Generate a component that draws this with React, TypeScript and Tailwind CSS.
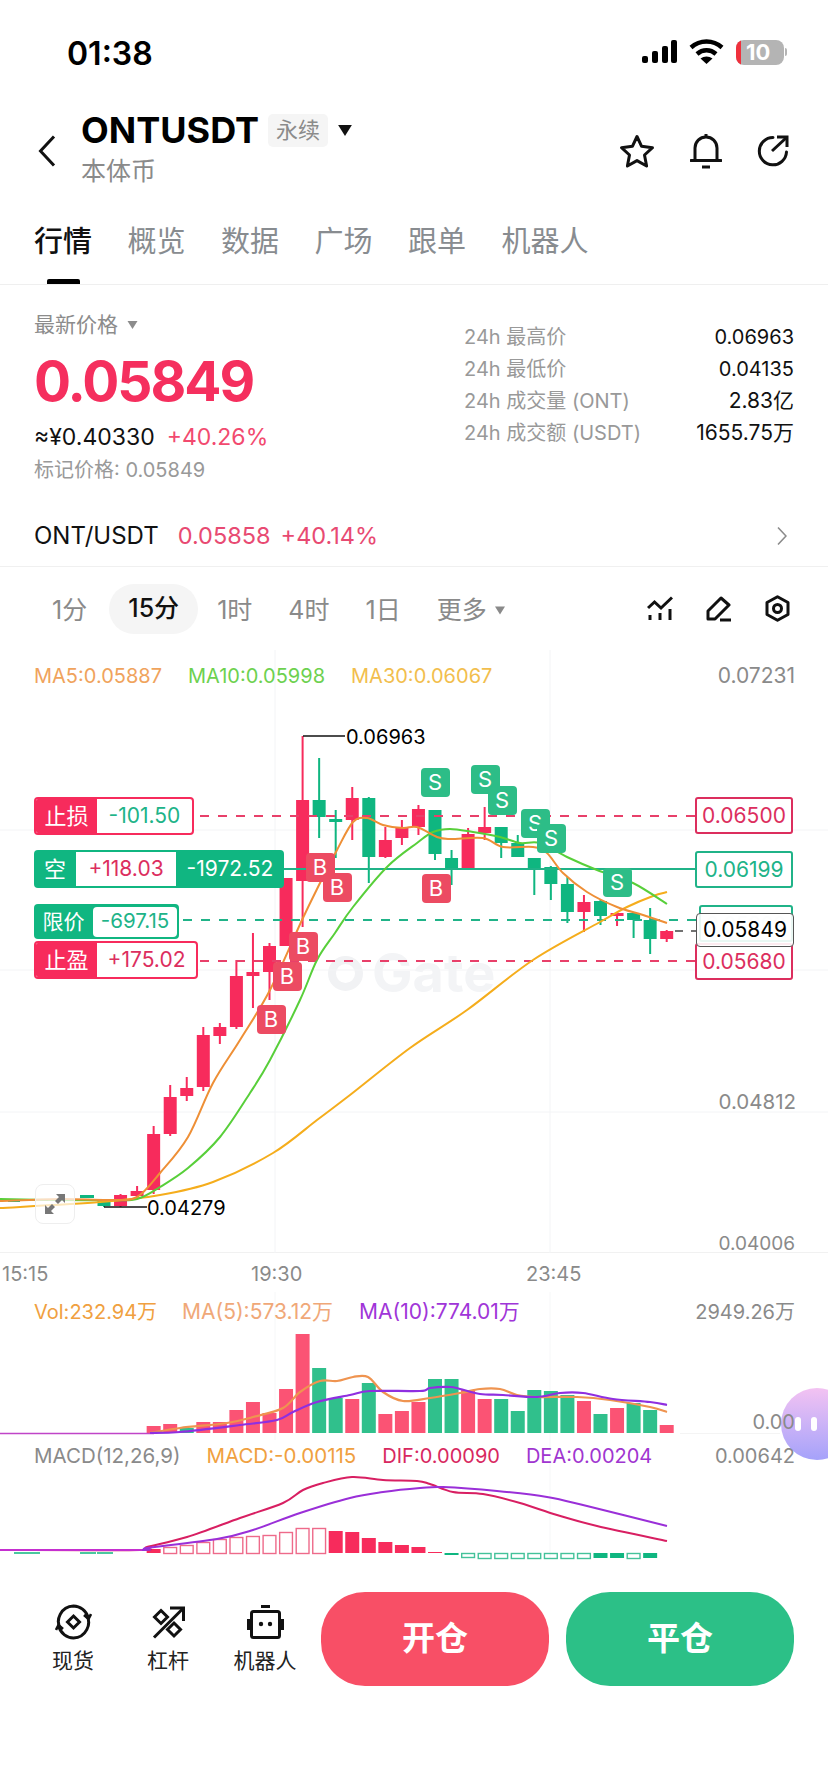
import React from "react";

const xOf = (i: number) => 104 + 16.55 * i;

// [bodyTop, bodyBottom, wickTop, wickBottom, isUp]
const candles: [number, number, number, number, boolean][] = [
  [1200, 1206, 1199, 1207, false],
  [1195, 1206, 1194, 1207, true],
  [1191, 1196, 1186, 1197, true],
  [1134, 1190, 1126, 1194, true],
  [1097, 1134, 1085, 1136, true],
  [1088, 1096, 1077, 1101, true],
  [1035, 1087, 1027, 1091, true],
  [1027, 1036, 1023, 1044, true],
  [976, 1027, 960, 1029, true],
  [972, 976, 933, 1008, true],
  [946, 972, 943, 1000, true],
  [878, 946, 878, 946, true],
  [800, 881, 736, 927, true],
  [800, 817, 758, 838, false],
  [819, 822, 810, 858, false],
  [798, 820, 787, 840, true],
  [798, 857, 797, 883, false],
  [840, 857, 827, 858, true],
  [828, 838, 820, 845, true],
  [809, 827, 805, 835, true],
  [810, 854, 810, 860, false],
  [858, 868, 850, 885, false],
  [834, 868, 828, 868, true],
  [827, 833, 807, 840, true],
  [827, 843, 827, 858, false],
  [843, 857, 835, 857, false],
  [858, 868, 858, 895, false],
  [867, 884, 866, 900, false],
  [884, 912, 877, 923, false],
  [902, 912, 895, 932, true],
  [901, 916, 900, 925, false],
  [913, 916, 912, 926, true],
  [913, 920, 912, 938, false],
  [920, 939, 908, 954, false],
  [931, 939, 930, 942, true],
];

const ma5: [number, number][] = [[0,1201],[60,1199],[110,1200],[137,1197],[160,1173],[188,1137],[213,1083],[240,1040],[270,990],[302,920],[320,883],[337,850],[353,822],[367,818],[383,825],[403,828],[417,827],[437,837],[450,839],[483,838],[503,847],[533,847],[547,853],[563,873],[587,892],[617,907],[643,915],[667,923]];
const ma10: [number, number][] = [[0,1199],[60,1200],[110,1200],[137,1199],[160,1187],[188,1168],[220,1137],[250,1093],[270,1060],[300,1000],[317,960],[335,933],[353,907],[387,867],[417,843],[433,832],[450,829],[473,832],[500,837],[520,843],[540,843],[567,857],[597,870],[633,883],[667,904]];
const ma30: [number, number][] = [[0,1208],[100,1202],[160,1195],[213,1182],[273,1153],[317,1120],[350,1095],[410,1048],[467,1010],[533,960],[600,922],[627,907],[653,896],[667,892]];

const vols: [number, boolean][] = [[1426,true],[1424,true],[1428,false],[1422,true],[1422,true],[1410,true],[1402,true],[1413,true],[1389,true],[1334,true],[1368,false],[1398,false],[1399,true],[1383,false],[1414,true],[1411,true],[1402,true],[1379,false],[1379,false],[1390,true],[1399,true],[1399,false],[1411,false],[1390,false],[1391,false],[1395,false],[1401,true],[1414,false],[1408,true],[1403,false],[1410,false],[1425,true]];
const volMa5: [number, number][] = [[150,1433],[180,1428],[227,1423],[253,1417],[283,1408],[300,1392],[320,1381],[337,1381],[353,1377],[368,1377],[383,1392],[403,1401],[430,1398],[460,1393],[480,1389],[500,1389],[517,1395],[537,1397],[577,1397],[610,1400],[650,1407],[667,1412]];
const volMa10: [number, number][] = [[150,1433],[180,1432],[240,1425],[277,1420],[293,1412],[317,1402],[350,1395],[370,1391],[420,1391],[430,1388],[450,1387],[460,1389],[480,1394],[503,1395],[537,1397],[560,1393],[583,1393],[613,1399],[650,1402],[667,1405]];

const dif: [number, number][] = [[0,1550],[140,1550],[147,1547],[187,1537],[240,1518],[283,1503],[303,1490],[323,1483],[352,1477],[383,1480],[417,1481],[430,1484],[453,1492],[483,1494],[520,1503],[557,1515],[597,1526],[667,1541]];
const dea: [number, number][] = [[0,1550],[140,1550],[147,1548],[217,1539],[253,1530],[300,1513],[350,1498],[383,1492],[420,1488],[443,1487],[497,1491],[547,1497],[587,1506],[667,1526]];
// [top, bottom, filled, up]
const macd: [number, number, boolean, boolean][] = [
  [1549,1553,true,true],[1547,1553,false,true],[1545,1553,false,true],[1542,1553,false,true],[1539,1553,false,true],[1537,1553,false,true],[1536,1553,false,true],[1535,1553,false,true],[1532,1553,false,true],[1528,1553,false,true],[1528,1553,false,true],
  [1531,1553,true,true],[1532,1553,true,true],[1538,1553,true,true],[1542,1553,true,true],[1545,1553,true,true],[1547,1553,true,true],
  [1552,1553,true,true],[1553,1555,true,false],[1553,1557,false,false],[1553,1558,false,false],[1553,1558,false,false],[1553,1558,false,false],[1553,1558,false,false],[1553,1558,false,false],[1553,1558,false,false],[1553,1558,false,false],[1553,1558,true,false],[1553,1558,true,false],[1553,1558,false,false],[1553,1558,true,false],
];

function smooth(p: [number, number][]) {
  let d = `M${p[0][0]} ${p[0][1]}`;
  for (let i = 0; i < p.length - 1; i++) {
    const a = p[Math.max(i - 1, 0)], b = p[i], c = p[i + 1], e = p[Math.min(i + 2, p.length - 1)];
    d += ` C${(b[0] + (c[0] - a[0]) / 6).toFixed(1)} ${(b[1] + (c[1] - a[1]) / 6).toFixed(1)} ${(c[0] - (e[0] - b[0]) / 6).toFixed(1)} ${(c[1] - (e[1] - b[1]) / 6).toFixed(1)} ${c[0]} ${c[1]}`;
  }
  return d;
}

const RED = "#f72b5c";
const GREEN = "#0fb680";

function Tri({ className }: { className: string }) {
  return (
    <svg viewBox="0 0 10 8" className={className}>
      <path d="M0 0h10L5 8z" fill="currentColor" />
    </svg>
  );
}

function StatusBar() {
  return (
    <div className="flex h-[100px] items-start justify-between pl-[67px] pr-[41px] pt-[35px]">
      <span className="text-[32px] font-semibold leading-[38px] text-black">01:38</span>
      <div className="mt-[4px] flex items-center gap-[12px]">
        <svg width="36" height="24" viewBox="0 0 36 24" fill="#000">
          <rect x="1" y="16" width="6" height="7" rx="2" />
          <rect x="11" y="11" width="6" height="12" rx="2" />
          <rect x="21" y="6" width="6" height="17" rx="2" />
          <rect x="30" y="0" width="6" height="23" rx="2" />
        </svg>
        <svg width="35" height="26" viewBox="0 0 35 26" fill="none" stroke="#000" strokeWidth="4.4">
          <path d="M2 8.5C11 0.5 24 0.5 33 8.5" />
          <path d="M8 15C13.5 10 21.5 10 27 15" />
          <path d="M17.5 25L11.5 19.5C15 16.8 20 16.8 23.5 19.5Z" fill="#000" stroke="none" />
        </svg>
        <div className="flex items-center">
          <div className="flex h-[25px] w-[48px] items-center overflow-hidden rounded-[8px] bg-[#b4b4b4]">
            <div className="h-full w-[5px] bg-[#f0303c]" />
            <span className="ml-[5px] text-[22px] font-bold leading-none text-white">10</span>
          </div>
          <div className="ml-[1px] h-[8px] w-[2px] rounded-r bg-[#b4b4b4]" />
        </div>
      </div>
    </div>
  );
}

function Header() {
  return (
    <div className="flex h-[90px] items-start pl-[38px] pr-[39px]">
      <svg width="18" height="32" viewBox="0 0 18 32" fill="none" stroke="#111" strokeWidth="3" className="mt-[35px]">
        <path d="M16 1.5L2.5 16L16 30.5" />
      </svg>
      <div className="ml-[25px] flex flex-col">
        <div className="mt-[13px] flex items-center">
          <span className="text-[36px] font-bold leading-[34px] text-black">ONTUSDT</span>
          <span className="ml-[9px] flex h-[33px] w-[60px] items-center justify-center rounded-[5px] bg-[#f5f5f5] text-[22px] text-[#8b8b8b]">永续</span>
          <Tri className="ml-[10px] h-[11px] w-[14px] text-[#111]" />
        </div>
        <span className="mt-[9px] text-[25px] leading-[30px] text-[#8a8a8a]">本体币</span>
      </div>
      <div className="ml-auto mt-[33px] flex items-center gap-[35px]">
        <svg width="36" height="35" viewBox="0 0 36 35" fill="none" stroke="#111" strokeWidth="3" strokeLinejoin="round">
          <path d="M18 2.5L22.6 12.3L33.5 13.7L25.5 21L27.6 32L18 26.6L8.4 32L10.5 21L2.5 13.7L13.4 12.3Z" />
        </svg>
        <svg width="32" height="36" viewBox="0 0 32 36" fill="none" stroke="#111" strokeWidth="3">
          <path d="M1 27.5H31" strokeLinecap="round" />
          <path d="M5 27.5V15C5 8.5 10 4 16 4C22 4 27 8.5 27 15V27.5" />
          <path d="M16 1V4" />
          <path d="M12 34H20" />
        </svg>
        <svg width="32" height="32" viewBox="0 0 32 32" fill="none" stroke="#111" strokeWidth="3">
          <path d="M29.5 17A13.6 13.6 0 1 1 16 2.6" strokeLinecap="round" />
          <path d="M15 16L29 3" />
          <path d="M20 2H30V12" />
        </svg>
      </div>
    </div>
  );
}

function Tabs() {
  const tabs = ["行情", "概览", "数据", "广场", "跟单", "机器人"];
  return (
    <div className="relative flex h-[95px] gap-[35.5px] border-b border-[#efefef] pl-[34px] pt-[32px]">
      {tabs.map((t, i) => (
        <span key={t} className={i === 0 ? "text-[29px] font-medium leading-[40px] text-[#111]" : "text-[29px] leading-[40px] text-[#888c90]"}>{t}</span>
      ))}
      <div className="absolute bottom-0 left-[47px] h-[5px] w-[33px] rounded-t-[2px] bg-black" />
    </div>
  );
}

function Stat({ k, v, wide }: { k: string; v: string; wide?: boolean }) {
  return (
    <div className="flex h-[32px] items-center justify-between">
      <span className="text-[20px] text-[#999]">{k}</span>
      <span className={wide ? "text-[21px] text-[#111]" : "text-[20px] text-[#111]"}>{v}</span>
    </div>
  );
}

function PriceBlock() {
  return (
    <div className="flex h-[216px] justify-between pl-[34px] pr-[34px]">
      <div className="flex flex-col">
        <div className="mt-[26px] flex items-center">
          <span className="text-[21px] leading-[28px] text-[#8c8c8c]">最新价格</span>
          <Tri className="ml-[9px] h-[8px] w-[11px] text-[#8c8c8c]" />
        </div>
        <span className="mt-[8px] text-[55px] font-bold leading-[68px] tracking-[-2px] text-[#f52f5e]">0.05849</span>
        <div className="mt-[6px] flex items-center">
          <span className="text-[23px] leading-[32px] text-[#111]">≈¥0.40330</span>
          <span className="ml-[12px] text-[23px] leading-[32px] text-[#f24a6f]">+40.26%</span>
        </div>
        <span className="mt-[2px] text-[20px] leading-[30px] text-[#999]">标记价格: 0.05849</span>
      </div>
      <div className="mt-[36px] w-[330px]">
        <Stat k="24h 最高价" v="0.06963" />
        <Stat k="24h 最低价" v="0.04135" />
        <Stat k="24h 成交量 (ONT)" v="2.83亿" wide />
        <Stat k="24h 成交额 (USDT)" v="1655.75万" wide />
      </div>
    </div>
  );
}

function SpotRow() {
  return (
    <div className="flex h-[66px] items-center border-b border-[#f0f0f0] pl-[34px] pr-[41px] pt-[4px]">
      <span className="text-[24px] text-[#111]">ONT/USDT</span>
      <span className="ml-[19px] text-[23.5px] text-[#e84a72]">0.05858</span>
      <span className="ml-[10px] text-[23.5px] text-[#e84a72]">+40.14%</span>
      <svg width="10" height="20" viewBox="0 0 10 20" fill="none" stroke="#8b8b8b" strokeWidth="1.6" className="ml-auto">
        <path d="M1 1.5L9 10L1 18.5" />
      </svg>
    </div>
  );
}

function TimeBar() {
  const item = "h-[50px] whitespace-nowrap text-[25px] leading-[50px] text-[#8a8a8a]";
  return (
    <div className="flex h-[83px] items-start pl-[52px] pr-[38px] pt-[18px]">
      <span className={item}>1分</span>
      <span className="ml-[22px] -mt-px flex h-[50px] w-[89px] items-center justify-center rounded-full bg-[#f5f5f5] text-[25px] font-medium text-[#111]">15分</span>
      <span className={"ml-[19px] " + item}>1时</span>
      <span className={"ml-[36px] " + item}>4时</span>
      <span className={"ml-[36px] " + item}>1日</span>
      <span className={"ml-[36px] " + item}>更多</span>
      <Tri className="ml-[8px] mt-[21px] h-[9px] w-[10px] text-[#8a8a8a]" />
      <div className="ml-auto mt-[10px] flex items-center gap-[33px]">
        <svg width="26" height="25" viewBox="0 0 26 25" fill="none" stroke="#111" strokeWidth="3">
          <path d="M1 12L7.5 6L14 12L25 1.5" />
          <path d="M3 19V24" />
          <path d="M13 17V24" />
          <path d="M23 13V24" />
        </svg>
        <svg width="26" height="26" viewBox="0 0 26 26" fill="none" stroke="#111" strokeWidth="3" strokeLinejoin="round">
          <path d="M2 15L15 2L23 9L9 23H2Z" />
          <path d="M14 24H25" />
        </svg>
        <svg width="25" height="27" viewBox="0 0 25 27" fill="none" stroke="#111" strokeWidth="3" strokeLinejoin="round">
          <path d="M12.5 1.8L23 7.5V19.5L12.5 25.2L2 19.5V7.5Z" />
          <circle cx="12.5" cy="13.5" r="4" />
        </svg>
      </div>
    </div>
  );
}

function Marker({ x, y, kind }: { x: number; y: number; kind: "B" | "S" }) {
  const isB = kind === "B";
  return (
    <div
      className={isB ? "absolute flex h-[29px] w-[29px] items-center justify-center rounded-[4px] bg-[#ec4b62] text-[22px] text-white" : "absolute flex h-[29px] w-[29px] items-center justify-center rounded-[4px] bg-[#2dbd87] text-[22px] text-white"}
      style={{ left: x - 14.5, top: y - 14.5 - 650 }}
    >
      {kind}
    </div>
  );
}

function PriceBox({ top, text, red }: { top: number; text: string; red: boolean }) {
  return (
    <div
      className={red ? "absolute left-[695px] flex h-[37px] w-[98px] items-center justify-center rounded-[3px] border-2 border-[#dc2e5e] bg-white text-[21px] text-[#dc2e5e]" : "absolute left-[695px] flex h-[37px] w-[98px] items-center justify-center rounded-[3px] border-2 border-[#20b388] bg-white text-[21px] text-[#20b388]"}
      style={{ top: top - 650 }}
    >
      {text}
    </div>
  );
}

function RedTag({ top, label, value, valueClass, width }: { top: number; label: string; value: string; valueClass: string; width: number }) {
  return (
    <div
      className="absolute left-[34px] flex h-[38px] overflow-hidden rounded-[4px] border-2 border-[#f72b5c] bg-white"
      style={{ top: top - 650, width }}
    >
      <span className="flex w-[61px] items-center justify-center bg-[#f72b5c] text-[22px] text-white">{label}</span>
      <span className={"flex flex-1 items-center justify-center text-[21px] " + valueClass}>{value}</span>
    </div>
  );
}

function MainPane() {
  const bs: [number, number][] = [[320, 867], [337, 887], [303, 946], [287, 976], [271, 1019], [436, 888]];
  const ss: [number, number][] = [[435, 782], [485, 779], [502, 800], [535, 823], [551, 838], [617, 882]];
  return (
    <div className="relative h-[603px] border-b border-[#f1f1f1]">
      {/* watermark */}
      <div className="absolute left-[328px] top-[296px] flex items-center gap-[9px] text-[#f3f4f6]">
        <div className="h-[35px] w-[35px] rounded-full border-[8px] border-[#f1f2f4]" />
        <span className="text-[54px] font-bold leading-[54px]">Gate</span>
      </div>
      <svg className="absolute left-0 top-0" width="828" height="603" viewBox="0 650 828 603" fill="none">
        <path d="M0 830H828M0 970H828M0 1112H828M275 650V1253M550 650V1253" stroke="#f3f4f6" strokeWidth="1" />
        {candles.map(([t, b, h, l, up], i) => {
          const x = xOf(i);
          const c = up ? RED : GREEN;
          return (
            <g key={i}>
              <rect x={x - 1} y={h} width="2" height={l - h} fill={c} />
              <rect x={x - 6.5} y={t} width="13" height={b - t} fill={c} />
            </g>
          );
        })}
        <path d="M8 1199h12v3H8zM40 1199h8v2h-8zM80 1195h14v3H80z" fill={GREEN} />
        {/* order lines */}
        <path d="M200 816H695" stroke="#e8406a" strokeWidth="2" strokeDasharray="9 9" />
        <path d="M284 869H695" stroke="#20b388" strokeWidth="2" />
        <path d="M183 920H697" stroke="#20b388" strokeWidth="2" strokeDasharray="9 9" />
        <path d="M200 961H695" stroke="#e8406a" strokeWidth="2" strokeDasharray="9 9" />
        <path d="M675 931H697" stroke="#444" strokeWidth="1.5" strokeDasharray="8 8" />
        <path d={smooth(ma30)} stroke="#f5ad1c" strokeWidth="2" />
        <path d={smooth(ma10)} stroke="#58cf3a" strokeWidth="2" />
        <path d={smooth(ma5)} stroke="#ee8f36" strokeWidth="2" />
        <path d="M303 736H345" stroke="#111" strokeWidth="1.5" />
        <path d="M104 1207H147" stroke="#111" strokeWidth="1.5" />
      </svg>

      {/* legend */}
      <div className="absolute left-[34px] top-[14px] flex gap-[26px] text-[20px] leading-[24px]">
        <span className="text-[#f0a35c]">MA5:0.05887</span>
        <span className="text-[#6dd14f]">MA10:0.05998</span>
        <span className="text-[#f2be4d]">MA30:0.06067</span>
      </div>
      <span className="absolute right-[33px] top-[14px] text-[21px] leading-[24px] text-[#8a8a8a]">0.07231</span>
      <span className="absolute right-[32px] top-[440px] text-[20.5px] leading-[24px] text-[#8a8a8a]">0.04812</span>
      <span className="absolute right-[33px] top-[582px] text-[19px] leading-[24px] text-[#8a8a8a]">0.04006</span>
      <span className="absolute left-[346px] top-[75px] text-[20px] leading-[24px] text-black">0.06963</span>
      <span className="absolute left-[147px] top-[546px] text-[20px] leading-[24px] text-black">0.04279</span>

      {/* expand button */}
      <div className="absolute left-[35px] top-[534px] flex h-[40px] w-[40px] items-center justify-center rounded-[8px] border border-[#eeeeee] bg-white/70">
        <svg width="26" height="26" viewBox="0 0 26 26" fill="#777">
          <path d="M14 3H23V12L20 9L16 13L13 10L17 6Z" />
          <path d="M12 23H3V14L6 17L10 13L13 16L9 20Z" />
        </svg>
      </div>

      {bs.map(([x, y], i) => <Marker key={"b" + i} x={x} y={y} kind="B" />)}
      {ss.map(([x, y], i) => <Marker key={"s" + i} x={x} y={y} kind="S" />)}

      {/* left order tags */}
      <RedTag top={797} label="止损" value="-101.50" valueClass="text-[#20b388]" width={160} />
      <div className="absolute left-[34px] top-[200px] flex h-[38px] w-[250px] items-center overflow-hidden rounded-[4px] bg-[#10b681] text-[21px] text-white">
        <span className="w-[42px] text-center text-[22px]">空</span>
        <span className="flex h-[34px] w-[100px] items-center justify-center bg-white text-[#dc2e5e]">+118.03</span>
        <span className="flex-1 text-center">-1972.52</span>
      </div>
      <div className="absolute left-[34px] top-[254px] flex h-[35px] w-[145px] items-center rounded-[4px] bg-[#10b681] pr-[2px] text-white">
        <span className="w-[59px] text-center text-[21px]">限价</span>
        <span className="flex h-[30px] flex-1 items-center justify-center rounded-[4px] bg-white text-[20.5px] text-[#20b388]">-697.15</span>
      </div>
      <RedTag top={941} label="止盈" value="+175.02" valueClass="text-[#dc2e5e]" width={164} />

      {/* right price boxes */}
      <PriceBox top={797} text="0.06500" red />
      <PriceBox top={851} text="0.06199" red={false} />
      <div className="absolute left-[699px] top-[255px] flex h-[37px] w-[94px] items-center justify-center rounded-[3px] border-2 border-[#20b388] bg-white text-[20px] text-[#e3e6e8]">0.05900</div>
      <PriceBox top={943} text="0.05680" red />
      <div className="absolute left-[696px] top-[263px] flex h-[34px] w-[98px] items-center justify-center rounded-[4px] border border-[#555] bg-white/90 text-[21px] text-black">0.05849</div>
    </div>
  );
}

function TimeAxis() {
  return (
    <div className="relative h-[39px] text-[20px] text-[#8a8a8a]">
      <span className="absolute left-[2px] top-[9px] leading-[24px]">15:15</span>
      <span className="absolute left-[251px] top-[9px] leading-[24px]">19:30</span>
      <span className="absolute left-[526px] top-[9px] leading-[24px]">23:45</span>
    </div>
  );
}

function VolPane() {
  return (
    <div className="relative h-[148px]">
      <svg className="absolute left-0 top-0" width="828" height="148" viewBox="0 1292 828 148" fill="none">
        <path d="M275 1292V1440M550 1292V1440" stroke="#f6f7f8" />
        <path d="M680 1433.5H780" stroke="#f4f4f4" />
        {vols.map(([t, up], i) => (
          <rect key={i} x={xOf(i + 3) - 7} y={t} width="14" height={1433 - t} fill={up ? "#fb5374" : "#30c08c"} />
        ))}
        <path d="M0 1433.5H154" stroke="#c044c8" strokeWidth="1.5" />
        <path d={smooth(volMa5)} stroke="#ef9450" strokeWidth="2.2" />
        <path d={smooth(volMa10)} stroke="#8f2fe0" strokeWidth="2.2" />
      </svg>
      <div className="absolute left-[34px] top-[8px] flex items-center text-[20px] leading-[24px]">
        <span className="text-[#f0a040]">Vol:232.94万</span>
        <span className="ml-[25px] text-[21px] text-[#f0a878]">MA(5):573.12万</span>
        <span className="ml-[26px] text-[21px] text-[#a035d8]">MA(10):774.01万</span>
      </div>
      <span className="absolute right-[33px] top-[8px] text-[20px] leading-[24px] text-[#8a8a8a]">2949.26万</span>
      <span className="absolute right-[33px] top-[118px] z-10 text-[20px] leading-[24px] text-[#8a8a8a]">0.00</span>
    </div>
  );
}

function MacdPane() {
  return (
    <div className="relative h-[130px]">
      <svg className="absolute left-0 top-0" width="828" height="130" viewBox="0 1440 828 130" fill="none">
        <path d="M550 1440V1558" stroke="#f6f7f8" />
        <path d="M14 1553h16M28 1553h12M80 1553h16M97 1553h16" stroke={GREEN} strokeWidth="1.5" />
        {macd.map(([t, b, filled, up], i) => {
          const c = up ? "#f72b5c" : GREEN;
          const x = xOf(i + 3);
          return filled ? (
            <rect key={i} x={x - 7} y={t} width="14" height={b - t} fill={c} />
          ) : (
            <rect key={i} x={x - 6.4} y={t + 0.5} width="12.8" height={b - t} stroke={up ? "#ee6a8a" : "#44c29a"} strokeWidth="1.4" />
          );
        })}
        <path d={smooth(dif)} stroke="#d81f62" strokeWidth="2" />
        <path d={smooth(dea)} stroke="#9a2fd8" strokeWidth="2" />
        <path d="M0 1550H142" stroke="#c52fd0" strokeWidth="2" />
      </svg>
      <div className="absolute left-[34px] top-[4px] flex gap-[26px] text-[20.5px] leading-[24px]">
        <span className="text-[#8a8a8a]">MACD(12,26,9)</span>
        <span className="text-[#f0a040]">MACD:-0.00115</span>
        <span className="text-[20px] text-[#d82860]">DIF:0.00090</span>
        <span className="text-[20px] text-[#a035d0]">DEA:0.00204</span>
      </div>
      <span className="absolute right-[33px] top-[4px] z-10 text-[20px] leading-[24px] text-[#8a8a8a]">0.00642</span>
    </div>
  );
}

function BottomItem({ label, children }: { label: string; children: React.ReactNode }) {
  return (
    <div className="flex w-[74px] flex-col items-center">
      <div className="flex h-[36px] items-center justify-center">{children}</div>
      <span className="mt-[7px] whitespace-nowrap text-[21px] leading-[28px] text-[#222]">{label}</span>
    </div>
  );
}

function BottomBar() {
  return (
    <div className="flex h-[222px] items-start pl-[36px] pr-[34px] pt-[22px]">
      <div className="mt-[12px] flex gap-[21px]">
        <BottomItem label="现货">
          <svg width="37" height="36" viewBox="0 0 37 36" fill="none" stroke="#111" strokeWidth="3">
            <path d="M6 26A15.5 15.5 0 0 1 18.5 2A15.5 15.5 0 0 1 33 13" />
            <path d="M29 11L33.5 15L36 10" strokeWidth="2.6" />
            <path d="M31 10A15.5 15.5 0 0 1 18.5 34A15.5 15.5 0 0 1 4 23" />
            <path d="M8 25L3.5 21L1 26" strokeWidth="2.6" />
            <path d="M18.5 12L24.5 18L18.5 24L12.5 18Z" />
          </svg>
        </BottomItem>
        <BottomItem label="杠杆">
          <svg width="33" height="33" viewBox="0 0 33 33" fill="none" stroke="#111" strokeWidth="3">
            <path d="M2 31.5L31 2.5" />
            <path d="M18 2H31.5V15" />
            <path d="M9 4.5L15.5 11L9 17.5L2.5 11Z" />
            <path d="M22 17L28.5 23.5L22 30L15.5 23.5Z" />
          </svg>
        </BottomItem>
        <div className="ml-[2px]">
          <BottomItem label="机器人">
            <svg width="37" height="34" viewBox="0 0 37 34" fill="none">
              <rect x="4.5" y="6.5" width="28" height="26" rx="2" stroke="#111" strokeWidth="3" />
              <path d="M14 1.5H23" stroke="#111" strokeWidth="3" />
              <path d="M1.5 14V25M35.5 14V25" stroke="#111" strokeWidth="3" />
              <circle cx="14" cy="19" r="2.2" fill="#111" />
              <circle cx="23" cy="19" r="2.2" fill="#111" />
            </svg>
          </BottomItem>
        </div>
      </div>
      <button className="ml-[19px] flex h-[94px] w-[228px] items-center justify-center rounded-[44px] bg-[#f84f66] text-[33px] font-semibold text-white">开仓</button>
      <button className="ml-auto flex h-[94px] w-[228px] items-center justify-center rounded-[44px] bg-[#2cc087] text-[33px] font-semibold text-white">平仓</button>
    </div>
  );
}

export default function App() {
  return (
    <div className="relative h-[1792px] w-[828px] overflow-hidden bg-white font-['Inter','Noto_Sans_CJK_SC',sans-serif]">
      <StatusBar />
      <Header />
      <Tabs />
      <PriceBlock />
      <SpotRow />
      <TimeBar />
      <MainPane />
      <TimeAxis />
      <VolPane />
      <MacdPane />
      <BottomBar />
      {/* floating assistant */}
      <div className="absolute left-[781px] top-[1388px] flex h-[72px] w-[72px] items-center gap-[10px] rounded-full bg-gradient-to-b from-[#f3c2f2] to-[#a5a2fa] pl-[14px]">
        <div className="h-[14px] w-[6px] rounded-full bg-white" />
        <div className="h-[14px] w-[6px] rounded-full bg-white" />
      </div>
    </div>
  );
}
